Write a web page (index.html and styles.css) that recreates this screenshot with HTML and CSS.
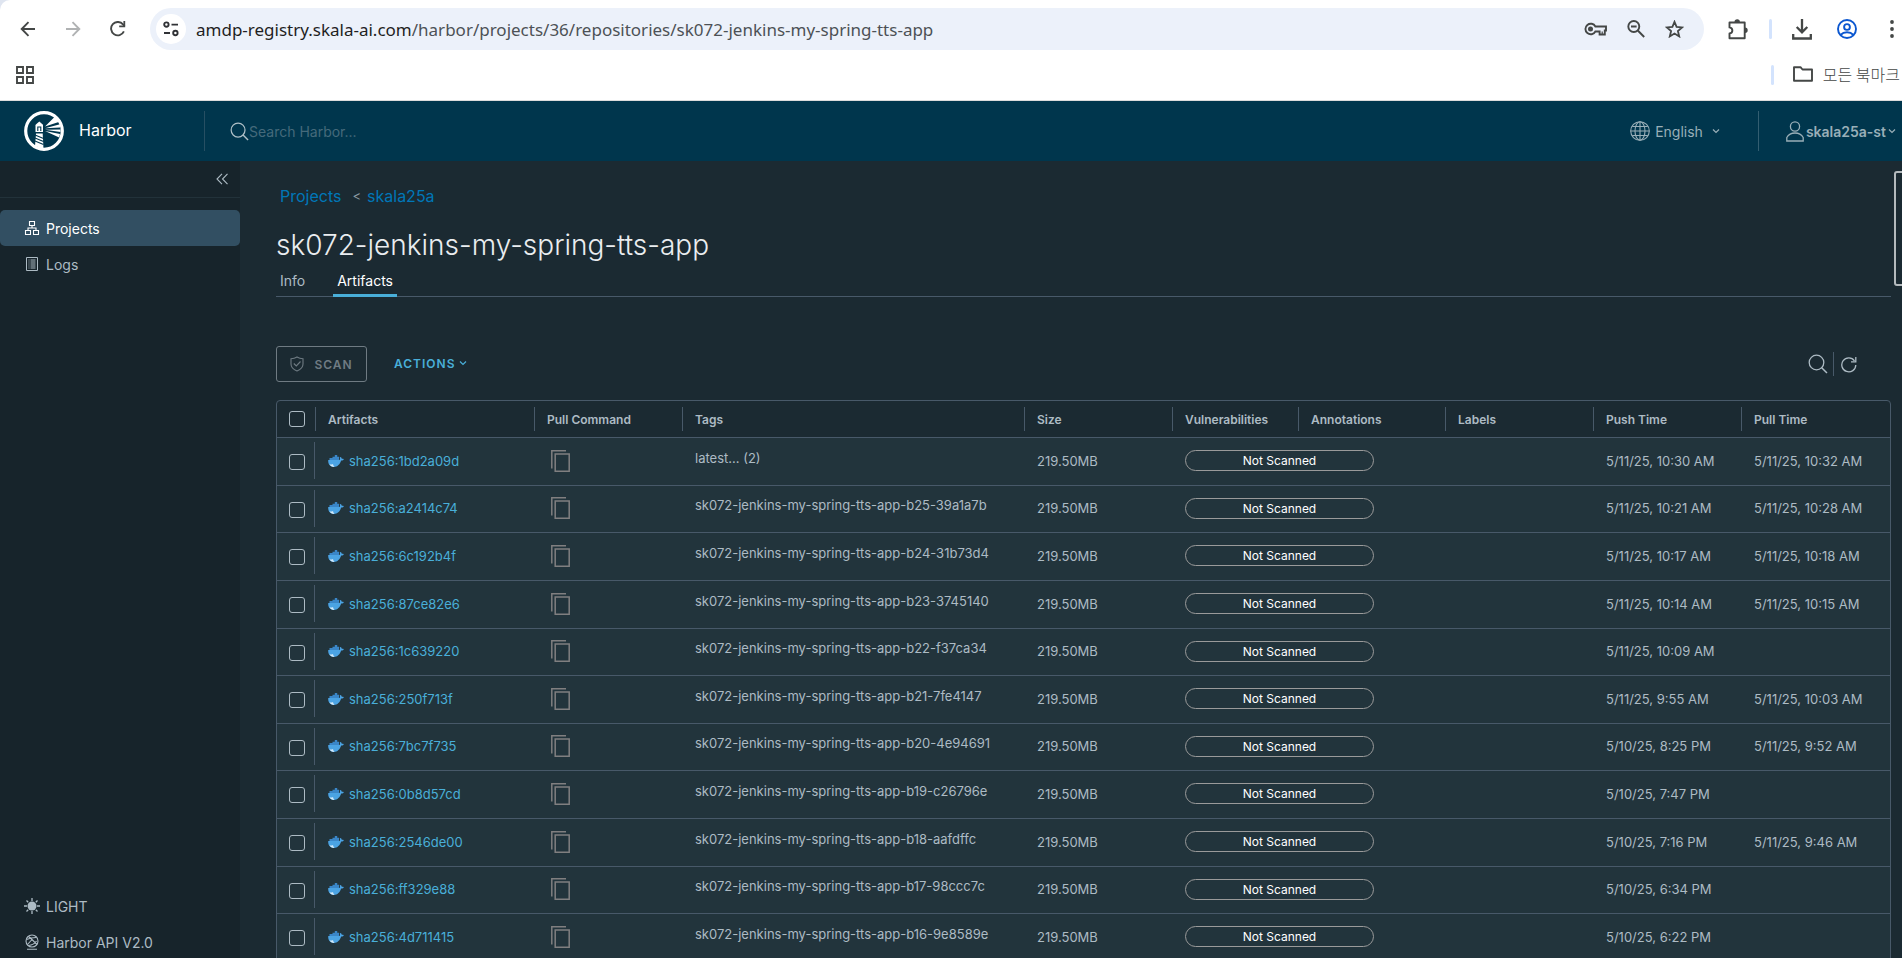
FILE: index.html
```html
<!DOCTYPE html>
<html lang="en">
<head>
<meta charset="utf-8">
<title>Harbor</title>
<link rel="stylesheet" href="styles.css">
</head>
<body>
<svg class="defs" aria-hidden="true">
  <symbol id="whale" viewBox="0 0 16 12">
    <path fill="#3a86c8" d="M2 3h2.500V1.800h2.300V0h2.400v1.800H11V5.500H1.500V3z"/>
    <path fill="#4ba3e3" d="M.2 5h11.300c.7-.6.7-1.600.2-2.500l.9-.6c.9.5 1.100 1.200 1.100 1.800.8-.1 1.600 0 2.200.5-.5 1-1.500 1.400-2.700 1.300C12 9.300 9.500 11.900 5.800 11.900 2 11.900 0 9.300.2 5z"/>
    <path fill="#d8ebf8" d="M1.500 9.200c1.500.4 2.500.3 3.500-.3.200 1 .5 2 1.500 3C4.300 12 2.600 11.200 1.500 9.200z"/>
  </symbol>
  <symbol id="copy" viewBox="0 0 19 22">
    <path fill="none" stroke="#807f80" stroke-width="1.500" d="M.8 18.500V.8h14.200"/>
    <path fill="none" stroke="#807f80" stroke-width="1.500" d="M4.200 4h14v17.200h-14z"/>
  </symbol>
  <symbol id="lens" viewBox="0 0 20 20">
    <circle cx="8.500" cy="8.500" r="7.300" fill="none" stroke="currentColor" stroke-width="1.300"/>
    <path d="M13.500 13.500l5.500 5.500" fill="none" stroke="currentColor" stroke-width="1.500"/>
  </symbol>
  <symbol id="caret" viewBox="0 0 8 6">
    <path d="M1 1.500l3 3 3-3" fill="none" stroke="currentColor" stroke-width="1.200"/>
  </symbol>
</svg>
<div class="window">
  <div class="browser">
    <div class="toolbar">
      <button class="tool" aria-label="Back"><svg width="16" height="16" viewBox="0 0 16 16"><path d="M15 8H2M8.500 1.200L1.700 8l6.800 6.800" fill="none" stroke="#444746" stroke-width="1.900"/></svg></button>
      <button class="tool" aria-label="Forward"><svg width="16" height="16" viewBox="0 0 16 16"><path d="M1 8h13M7.500 1.200L14.300 8l-6.800 6.800" fill="none" stroke="#b0b2b3" stroke-width="1.900"/></svg></button>
      <button class="tool" aria-label="Reload"><svg width="16" height="16" viewBox="0 0 16 16"><path d="M13.900 10.400A6.700 6.700 0 1 1 13 3.400L14.600 5" fill="none" stroke="#444746" stroke-width="1.900"/><path d="M15.200 0v6.200H9.200V4.400h4.200V0z" fill="#444746"/></svg></button>
      <div class="omnibox">
        <button class="site" aria-label="Site information"><svg width="16" height="16" viewBox="0 0 16 16" fill="none" stroke="#303236" stroke-width="1.900"><circle cx="3.400" cy="3.600" r="2.200"/><path d="M8.500 3.600h6.500M1 12h6"/><circle cx="12.400" cy="12" r="2.200"/></svg></button>
        <span class="url"><b>amdp-registry.skala-ai.com</b>/harbor/projects/36/repositories/sk072-jenkins-my-spring-tts-app</span>
        <button class="tool" aria-label="Passwords"><svg width="23" height="14" viewBox="0 0 23 14" fill="none" stroke="#444746" stroke-width="1.900"><path d="M11.400 4.500A5.300 5.300 0 1 0 11.400 9.500h4.200v3h5.200V8.500h1.200V4.500z"/><path d="M18.200 12V9.500" stroke-width="1.200"/><circle cx="6.500" cy="7" r="2.500" fill="#444746" stroke="none"/></svg></button>
        <button class="tool" aria-label="Zoom out"><svg width="18" height="18" viewBox="0 0 18 18" fill="none" stroke="#444746" stroke-width="1.900"><circle cx="6.800" cy="6.500" r="5.500"/><path d="M10.800 10.500l6.400 6.500M4 6.500h5.600"/></svg></button>
        <button class="tool" aria-label="Bookmark this page"><svg width="19" height="18" viewBox="0 0 19 18"><path d="M9.500 1.800l2.100 5.100 5.500.5-4.200 3.600 1.300 5.400-4.700-2.900-4.700 2.900 1.300-5.400L1.900 7.400l5.500-.5z" fill="none" stroke="#444746" stroke-width="1.800"/></svg></button>
      </div>
      <button class="tool ext" aria-label="Extensions"><svg width="21" height="21" viewBox="0 0 21 21"><path d="M1.500 3.500h15.200v15.700H1.500v-4.800c3.800-.6 3.800-5.400 0-6z" fill="none" stroke="#444746" stroke-width="1.900" stroke-linejoin="round"/><path d="M6.500 3a2.700 2.700 0 0 1 5.400 0zM17 8.500a2.700 2.700 0 0 1 0 5.400z" fill="#444746"/></svg></button>
      <span class="divider"></span>
      <button class="tool" aria-label="Downloads"><svg width="20" height="21" viewBox="0 0 20 21" fill="none" stroke="#444746" stroke-width="2.300"><path d="M10 0v13M4.700 8l5.300 5.300L15.300 8M1.200 15v4.500h17.600V15"/></svg></button>
      <button class="tool profile" aria-label="Profile"><svg width="20" height="20" viewBox="0 0 20 20" fill="none" stroke="#0b57d0" stroke-width="1.900"><circle cx="10" cy="10" r="9"/><circle cx="10" cy="8" r="2.900"/><path d="M3.500 16c3.500-3.600 9.500-3.600 13 0"/></svg></button>
      <button class="tool" aria-label="Menu"><svg width="4" height="18" viewBox="0 0 4 18" fill="#444746"><circle cx="2" cy="2" r="1.900"/><circle cx="2" cy="9" r="1.900"/><circle cx="2" cy="16" r="1.900"/></svg></button>
    </div>
    <div class="bookmarks">
      <button class="tool" aria-label="Apps"><svg width="18" height="18" viewBox="0 0 18 18" fill="none" stroke="#444746" stroke-width="1.900"><path d="M1 1h6v6H1zM11 1h6v6h-6zM1 11h6v6H1zM11 11h6v6h-6z"/></svg></button>
      <span class="divider"></span>
      <button class="allmarks"><svg width="20" height="16" viewBox="0 0 20 16"><path d="M1 14.800V1.200h6.500l2 2.300H19v11.300z" fill="none" stroke="#444746" stroke-width="1.900" stroke-linejoin="round"/></svg><span>모든 북마크</span></button>
    </div>
  </div>

  <header class="header">
    <a class="brand" href="#">
      <svg width="40" height="40" viewBox="0 0 40 40">
        <circle cx="20" cy="20" r="18.300" fill="none" stroke="#fff" stroke-width="3.200"/>
        <g fill="#fff">
          <path d="M15.300 10.500l3.700 3.300v1.200h-7.400v-1.200z"/><path d="M11.500 14.500h7.500V21h-7.500z"/>
          <path d="M12 22.500h6.700l.8 15.500-8.500-3z"/>
          <path d="M21 15.500L31 5.500l4.500 5.200zM21 17.300l15-4v3.200zM21 18.800l15.500-.3v2.500zM21 20l15 3-.8 3.500z"/>
        </g>
        <path d="M13.800 20v-4h3v4" fill="none" stroke="#00364d" stroke-width="1.100"/>
        <path d="M11 24l8.500 3.500M11 27l8.500 3.500M11 30l8.500 3.500" stroke="#00364d" stroke-width="1.100"/>
      </svg>
      <span>Harbor</span>
    </a>
    <label class="search"><svg width="19" height="19"><use href="#lens"/></svg><input type="text" placeholder="Search Harbor..." aria-label="Search Harbor"></label>
    <button class="lang"><svg width="20" height="20" viewBox="0 0 20 20" fill="none" stroke="currentColor" stroke-width="1.100"><circle cx="10" cy="10" r="9.300"/><ellipse cx="10" cy="10" rx="5" ry="9.300"/><path d="M10 .7v18.600M.7 10h18.600M2.300 5.500h15.400M2.300 14.500h15.400"/></svg><span>English</span><svg class="far" width="8" height="6"><use href="#caret"/></svg></button>
    <button class="user"><svg width="18" height="21" viewBox="0 0 18 21" fill="none" stroke="currentColor" stroke-width="1.300"><circle cx="9" cy="5.500" r="4.600"/><path d="M.8 20v-3.500C2.500 13.500 5.500 12 9 12s6.500 1.500 8.200 4.500V20z"/></svg><span>skala25a-st</span><svg width="8" height="6"><use href="#caret"/></svg></button>
  </header>

  <div class="body">
    <nav class="sidebar">
      <div class="collapse"><button aria-label="Collapse"><svg width="12" height="12" viewBox="0 0 12 12"><path d="M6 .8L1 6l5 5.200M11.500.8l-5 5.200 5 5.200" fill="none" stroke="currentColor" stroke-width="1.100"/></svg></button></div>
      <a class="item active" href="#"><svg width="16" height="16" viewBox="0 0 16 16" fill="none" stroke="currentColor" stroke-width="1.100"><path d="M5.500 1.500h5v4h-5zM1.500 10.500h5v4h-5zM9.500 10.500h5v4h-5zM8 5.500V8M4 10.500V8h8v2.500"/></svg>Projects</a>
      <a class="item" href="#"><svg width="16" height="16" viewBox="0 0 16 16" fill="none" stroke="currentColor"><path d="M2.500 1.500h11v13h-11z"/><path d="M4.500 4h1M4.500 6h1M4.500 8h1M4.500 10h1M4.500 12h1M6.500 4h5M6.500 6h5M6.500 8h5M6.500 10h5M6.500 12h5"/></svg>Logs</a>
      <div class="foot">
        <a class="item" href="#"><svg width="16" height="16" viewBox="0 0 16 16" stroke="currentColor" stroke-width="1.300"><circle cx="8" cy="8" r="4.500" fill="currentColor" stroke="none"/><path d="M8 0v3M8 13v3M0 8h3M13 8h3M2.500 2.500l1.700 1.700M11.800 11.800l1.700 1.700M2.500 13.500l1.700-1.700M11.800 4.200l1.700-1.700"/></svg>LIGHT</a>
        <a class="item" href="#"><svg width="16" height="16" viewBox="0 0 16 16" fill="none" stroke="currentColor" stroke-width="1.100"><circle cx="8" cy="7" r="6"/><path d="M4.500 2.500L8 5.500l5 5M2.500 5.500C5 4.500 8 3.500 12 3.500M3.500 10.500l4.500-5M4.500 11.500c2.500-.2 6-1.500 8-4.500M3 15.200h10"/></svg>Harbor API V2.0</a>
      </div>
    </nav>
    <main class="content">
      <div class="crumbs"><a href="#">Projects</a><span>&lt;</span><a href="#">skala25a</a></div>
      <h1>sk072-jenkins-my-spring-tts-app</h1>
      <div class="tabs"><button>Info</button><button class="on">Artifacts</button></div>
      <div class="actions">
        <button class="scan" disabled><svg width="14" height="16" viewBox="0 0 14 16" fill="none" stroke="currentColor" stroke-width="1.100"><path d="M7 1c2 1.300 4 1.700 6 1.700V8c0 3.200-2.500 5.600-6 7-3.500-1.400-6-3.800-6-7V2.700C3 2.700 5 2.300 7 1zM3.800 7.500l2.500 2.500 4.200-4.500"/></svg>SCAN</button>
        <button class="menu">ACTIONS<svg width="8" height="6"><use href="#caret"/></svg></button>
        <button class="find" aria-label="Filter"><svg width="20" height="20"><use href="#lens"/></svg></button>
        <button class="refresh" aria-label="Refresh"><svg width="16" height="17" viewBox="0 0 16 17" fill="none" stroke="currentColor" stroke-width="1.300"><path d="M14.800 9A7 7 0 1 1 13.500 4.800M14.800 1v4.800H10"/></svg></button>
      </div>
      <table class="grid">
        <colgroup><col class="c-check"><col class="c-art"><col class="c-std"><col><col class="c-std"><col class="c-vuln"><col class="c-ann"><col class="c-std"><col class="c-std"><col class="c-std"></colgroup>
        <thead><tr><th><div><input type="checkbox" aria-label="Select all"></div></th><th><div>Artifacts</div></th><th><div>Pull Command</div></th><th><div>Tags</div></th><th><div>Size</div></th><th><div>Vulnerabilities</div></th><th><div>Annotations</div></th><th><div>Labels</div></th><th><div>Push Time</div></th><th><div>Pull Time</div></th></tr></thead>
        <tbody>
        <tr><td><div class="pick"><input type="checkbox" aria-label="Select 1bd2a09d"></div></td><td><a href="#"><svg width="16" height="12"><use href="#whale"/></svg>sha256:1bd2a09d</a></td><td><button class="copy" aria-label="Copy"><svg width="19" height="22"><use href="#copy"/></svg></button></td><td class="tag">latest... (2)</td><td>219.50MB</td><td><span class="badge">Not Scanned</span></td><td></td><td></td><td>5/11/25, 10:30 AM</td><td>5/11/25, 10:32 AM</td></tr>
        <tr><td><div class="pick"><input type="checkbox" aria-label="Select a2414c74"></div></td><td><a href="#"><svg width="16" height="12"><use href="#whale"/></svg>sha256:a2414c74</a></td><td><button class="copy" aria-label="Copy"><svg width="19" height="22"><use href="#copy"/></svg></button></td><td class="tag">sk072-jenkins-my-spring-tts-app-b25-39a1a7b</td><td>219.50MB</td><td><span class="badge">Not Scanned</span></td><td></td><td></td><td>5/11/25, 10:21 AM</td><td>5/11/25, 10:28 AM</td></tr>
        <tr><td><div class="pick"><input type="checkbox" aria-label="Select 6c192b4f"></div></td><td><a href="#"><svg width="16" height="12"><use href="#whale"/></svg>sha256:6c192b4f</a></td><td><button class="copy" aria-label="Copy"><svg width="19" height="22"><use href="#copy"/></svg></button></td><td class="tag">sk072-jenkins-my-spring-tts-app-b24-31b73d4</td><td>219.50MB</td><td><span class="badge">Not Scanned</span></td><td></td><td></td><td>5/11/25, 10:17 AM</td><td>5/11/25, 10:18 AM</td></tr>
        <tr><td><div class="pick"><input type="checkbox" aria-label="Select 87ce82e6"></div></td><td><a href="#"><svg width="16" height="12"><use href="#whale"/></svg>sha256:87ce82e6</a></td><td><button class="copy" aria-label="Copy"><svg width="19" height="22"><use href="#copy"/></svg></button></td><td class="tag">sk072-jenkins-my-spring-tts-app-b23-3745140</td><td>219.50MB</td><td><span class="badge">Not Scanned</span></td><td></td><td></td><td>5/11/25, 10:14 AM</td><td>5/11/25, 10:15 AM</td></tr>
        <tr><td><div class="pick"><input type="checkbox" aria-label="Select 1c639220"></div></td><td><a href="#"><svg width="16" height="12"><use href="#whale"/></svg>sha256:1c639220</a></td><td><button class="copy" aria-label="Copy"><svg width="19" height="22"><use href="#copy"/></svg></button></td><td class="tag">sk072-jenkins-my-spring-tts-app-b22-f37ca34</td><td>219.50MB</td><td><span class="badge">Not Scanned</span></td><td></td><td></td><td>5/11/25, 10:09 AM</td><td></td></tr>
        <tr><td><div class="pick"><input type="checkbox" aria-label="Select 250f713f"></div></td><td><a href="#"><svg width="16" height="12"><use href="#whale"/></svg>sha256:250f713f</a></td><td><button class="copy" aria-label="Copy"><svg width="19" height="22"><use href="#copy"/></svg></button></td><td class="tag">sk072-jenkins-my-spring-tts-app-b21-7fe4147</td><td>219.50MB</td><td><span class="badge">Not Scanned</span></td><td></td><td></td><td>5/11/25, 9:55 AM</td><td>5/11/25, 10:03 AM</td></tr>
        <tr><td><div class="pick"><input type="checkbox" aria-label="Select 7bc7f735"></div></td><td><a href="#"><svg width="16" height="12"><use href="#whale"/></svg>sha256:7bc7f735</a></td><td><button class="copy" aria-label="Copy"><svg width="19" height="22"><use href="#copy"/></svg></button></td><td class="tag">sk072-jenkins-my-spring-tts-app-b20-4e94691</td><td>219.50MB</td><td><span class="badge">Not Scanned</span></td><td></td><td></td><td>5/10/25, 8:25 PM</td><td>5/11/25, 9:52 AM</td></tr>
        <tr><td><div class="pick"><input type="checkbox" aria-label="Select 0b8d57cd"></div></td><td><a href="#"><svg width="16" height="12"><use href="#whale"/></svg>sha256:0b8d57cd</a></td><td><button class="copy" aria-label="Copy"><svg width="19" height="22"><use href="#copy"/></svg></button></td><td class="tag">sk072-jenkins-my-spring-tts-app-b19-c26796e</td><td>219.50MB</td><td><span class="badge">Not Scanned</span></td><td></td><td></td><td>5/10/25, 7:47 PM</td><td></td></tr>
        <tr><td><div class="pick"><input type="checkbox" aria-label="Select 2546de00"></div></td><td><a href="#"><svg width="16" height="12"><use href="#whale"/></svg>sha256:2546de00</a></td><td><button class="copy" aria-label="Copy"><svg width="19" height="22"><use href="#copy"/></svg></button></td><td class="tag">sk072-jenkins-my-spring-tts-app-b18-aafdffc</td><td>219.50MB</td><td><span class="badge">Not Scanned</span></td><td></td><td></td><td>5/10/25, 7:16 PM</td><td>5/11/25, 9:46 AM</td></tr>
        <tr><td><div class="pick"><input type="checkbox" aria-label="Select ff329e88"></div></td><td><a href="#"><svg width="16" height="12"><use href="#whale"/></svg>sha256:ff329e88</a></td><td><button class="copy" aria-label="Copy"><svg width="19" height="22"><use href="#copy"/></svg></button></td><td class="tag">sk072-jenkins-my-spring-tts-app-b17-98ccc7c</td><td>219.50MB</td><td><span class="badge">Not Scanned</span></td><td></td><td></td><td>5/10/25, 6:34 PM</td><td></td></tr>
        <tr><td><div class="pick"><input type="checkbox" aria-label="Select 4d711415"></div></td><td><a href="#"><svg width="16" height="12"><use href="#whale"/></svg>sha256:4d711415</a></td><td><button class="copy" aria-label="Copy"><svg width="19" height="22"><use href="#copy"/></svg></button></td><td class="tag">sk072-jenkins-my-spring-tts-app-b16-9e8589e</td><td>219.50MB</td><td><span class="badge">Not Scanned</span></td><td></td><td></td><td>5/10/25, 6:22 PM</td><td></td></tr>
        </tbody>
      </table>
      <div class="thumb"></div>
    </main>
  </div>
</div>
</body>
</html>
```
FILE: styles.css
```css
* { box-sizing: border-box; }
html, body { margin: 0; height: 100%; }
body { background: #dfe5f0; font-family: Inter, "Noto Sans", sans-serif; font-size: 13px; color: #adbbc4; overflow: hidden; }
button { font: inherit; color: inherit; background: none; border: 0; padding: 0; display: flex; align-items: center; }
a { color: inherit; text-decoration: none; }
svg { display: block; flex: none; }
.defs { position: absolute; width: 0; height: 0; }
.window { display: flex; flex-direction: column; height: 100vh; overflow: hidden; }

.browser { background: #fff; border-radius: 10px 0 0 0; border-bottom: 1px solid #dcdcdc; height: 101px; flex: none; }
.toolbar { display: flex; align-items: center; height: 58px; padding: 0 8px 0 20px; gap: 29px; }
.toolbar > .tool { flex: none; }
.omnibox { flex: 1; display: flex; align-items: center; height: 42px; border-radius: 21px; background: #ecf1fa; padding: 0 20px 0 6px; gap: 20px; margin-left: -5px; }
.site { width: 30px; height: 30px; border-radius: 50%; background: #fff; justify-content: center; margin-right: -10px; }
.url { flex: 1; font-family: "Noto Sans", sans-serif; font-size: 17px; color: #4d5156; white-space: nowrap; }
.url b { font-weight: 400; color: #1f1f1f; }
.ext { margin-left: -5px; }
.profile { margin: 0 4px 0 -4px; }
.divider { width: 3px; height: 20px; border-radius: 2px; background: #d3e3fd; margin: 0 -9px; }
.bookmarks { display: flex; align-items: center; height: 34px; padding: 0 2px 0 16px; }
.bookmarks .divider { margin: 0 19px 0 auto; }
.allmarks { gap: 10px; color: #444746; font-family: "Noto Sans CJK KR", sans-serif; font-size: 16px; font-weight: 300; line-height: 22px; white-space: nowrap; padding-bottom: 2px; }

.header { display: flex; align-items: center; height: 60px; flex: none; background: #00364d; padding: 0 6px 0 24px; font-size: 14px; color: #99afb8; }
.brand { display: flex; align-items: center; gap: 15px; width: 181px; height: 40px; border-right: 1px solid #264f63; color: #fff; font-size: 16px; }
.brand span { padding-bottom: 2px; }
.search { display: flex; align-items: center; flex: 1; margin-left: 25px; color: #afc0c8; }
.search input { border: 0; background: none; outline: 0; padding: 0; font: inherit; color: #fff; width: 200px; }
.search input::placeholder { color: #456a7b; opacity: 1; }
.lang { gap: 5px; height: 40px; padding-right: 38px; border-right: 1px solid #335e71; }
.lang .far { margin-left: 4px; }
.user { gap: 2px; padding-left: 27px; font-weight: 600; white-space: nowrap; }

.body { display: flex; flex: 1; min-height: 0; }
.sidebar { width: 240px; flex: none; background: #17242b; display: flex; flex-direction: column; font-size: 14px; }
.collapse { display: flex; justify-content: flex-end; align-items: center; height: 37px; padding-right: 12px; border-bottom: 1px solid #22323a; margin-bottom: 12px; }
.item { display: flex; align-items: center; gap: 6px; height: 36px; padding-left: 24px; flex: none; }
.item.active { background: #324f62; color: #fff; border-radius: 5px; }
.foot { margin-top: auto; margin-bottom: -2px; }

.content { position: relative; flex: 1; min-width: 0; background: #1b2a32; padding: 24px 11px 0 36px; }
.crumbs { display: flex; align-items: center; height: 22px; padding-left: 4px; font-size: 16px; color: #0077b8; }
.crumbs span { font-size: 13px; color: #8c9aa3; margin: 0 6px 0 11px; }
h1 { margin: 20px 0 0; font-size: 28px; font-weight: 300; line-height: 36px; color: #eaedf0; white-space: nowrap; }
.tabs { display: flex; gap: 24px; height: 34px; border-bottom: 1px solid #485969; font-size: 14px; }
.tabs button { padding: 3px 4px 0; height: 34px; border-bottom: 3px solid transparent; }
.tabs .on { color: #fff; border-color: #49afd9; }
.actions { display: flex; align-items: center; height: 36px; margin: 49px 0 18px; padding-right: 34px; }
.scan { width: 91px; height: 36px; border: 1px solid #6f7b83; border-radius: 3px; color: #6f7b83; font-size: 12px; font-weight: 600; letter-spacing: 1px; gap: 10px; justify-content: center; }
.menu { margin: 0 auto 0 27px; color: #49afd9; font-size: 12px; font-weight: 600; letter-spacing: 1px; gap: 4px; padding-bottom: 2px; }
.find { height: 24px; padding-right: 5px; border-right: 1px solid #485969; }
.refresh { margin-left: 7px; }

.grid { width: 100%; table-layout: fixed; border-collapse: separate; border-spacing: 0; border: 1px solid #485969; border-radius: 4px 4px 0 0; }
.c-check { width: 39px; }
.c-art { width: 219px; }
.c-std { width: 148px; }
.c-vuln { width: 126px; }
.c-ann { width: 147px; }
th, td { padding: 0 0 0 12px; text-align: left; font-weight: 400; white-space: nowrap; }
th { height: 36px; padding-left: 0; }
th div { display: flex; align-items: center; height: 24px; padding-left: 12px; border-right: 1px solid #485969; font-size: 12px; font-weight: 600; }
th:last-child div { border-right: 0; }
td { height: 48px; background: #22343c; border-top: 1px solid #485969; padding-bottom: 2px; vertical-align: middle; }
tr:nth-child(5n+2) td, tr:nth-child(5n) td { height: 47px; }
td a { display: flex; align-items: center; gap: 5px; color: #49afd9; }
td.tag { padding-bottom: 8px; }
.pick { display: flex; align-items: center; height: 37px; border-right: 1px solid #485969; padding-top: 3px; margin-right: 1px; }
input[type=checkbox] { appearance: none; width: 16px; height: 16px; margin: 0; border: 1px solid #adbbc4; border-radius: 3px; }
.badge { display: block; width: 189px; height: 21px; line-height: 19px; border: 1px solid #9a9a9a; border-radius: 11px; text-align: center; font-size: 12px; color: #fff; position: relative; }
.copy { margin-left: 4px; }
.thumb { position: absolute; right: -4px; top: 10px; width: 12px; height: 115px; border: 2px solid #b4babd; border-radius: 3px; background: #1b2a32; }
```
